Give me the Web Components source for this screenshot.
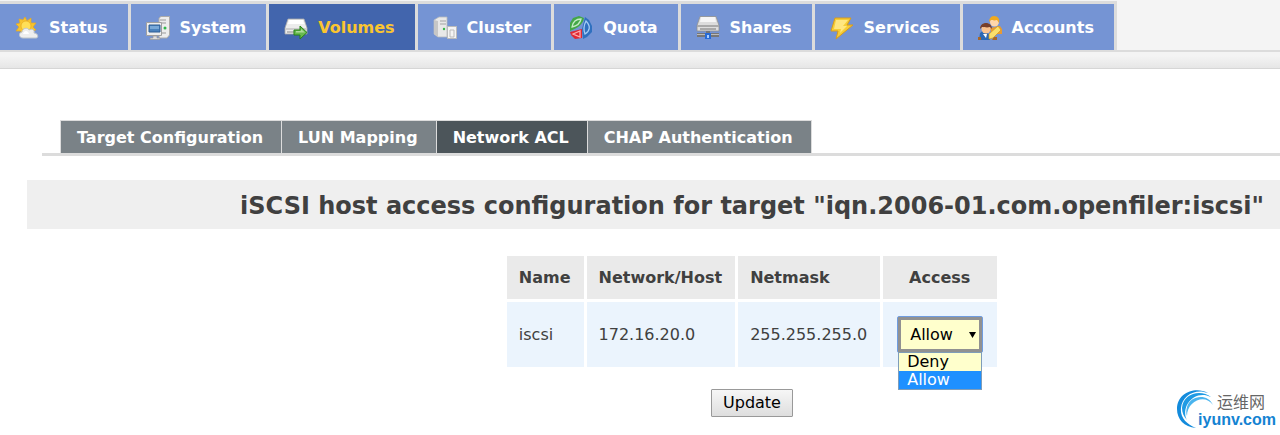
<!DOCTYPE html>
<html lang="en">
<head>
<meta charset="utf-8">
<meta name="viewport" content="width=device-width, initial-scale=1">
<title>Openfiler - Network ACL</title>
<style>
body { margin: 0; background: #fff; color: #404040; font: 16px/20px "DejaVu Sans", Verdana, sans-serif; overflow-x: hidden; }
</style>
</head>
<body>
<of-app></of-app>

<template id="t-app">
<style>
:host { display: block; position: relative; }
main { padding: 51px 0 18px 27px; }
.tabs { margin-left: 15px; }
.panel { padding-left: 197px; }
h1 { margin: 24px 0 27px; padding: 11px 0 8px 197px; background: #efefef; text-align: center; font-size: 24px; line-height: 30px; white-space: nowrap; }
of-brand { position: absolute; right: 4px; bottom: 6px; }
</style>
<of-nav>
<of-nav-item icon="status">Status</of-nav-item>
<of-nav-item icon="system">System</of-nav-item>
<of-nav-item icon="volumes" active>Volumes</of-nav-item>
<of-nav-item icon="cluster">Cluster</of-nav-item>
<of-nav-item icon="quota">Quota</of-nav-item>
<of-nav-item icon="shares">Shares</of-nav-item>
<of-nav-item icon="services">Services</of-nav-item>
<of-nav-item icon="accounts">Accounts</of-nav-item>
</of-nav>
<main>
<of-tabs class="tabs">
<of-tab>Target Configuration</of-tab>
<of-tab>LUN Mapping</of-tab>
<of-tab active>Network ACL</of-tab>
<of-tab>CHAP Authentication</of-tab>
</of-tabs>
<h1>iSCSI host access configuration for target "iqn.2006-01.com.openfiler:iscsi"</h1>
<div class="panel"><of-acl></of-acl></div>
</main>
<of-brand></of-brand>
</template>

<template id="t-nav">
<style>
:host { display: block; padding: 1px 0 16px; border-bottom: 1px solid #d6d6d6; background: linear-gradient(#f4f4f4 56px, #e6e6e6); }
nav { display: flex; border-bottom: 2px solid #dcdcdc; }
</style>
<nav><slot></slot></nav>
</template>

<template id="t-nav-item">
<style>
:host { display: block; border: solid #dcdcdc; border-width: 3px 3px 0 0; }
a { display: flex; align-items: center; gap: 10px; height: 46px; box-sizing: border-box; padding: 2px 20px 0 15px; background: #7594d4; color: #fff; font-weight: bold; text-decoration: none; }
:host([active]) a { background: #4265ad; color: #fbc52f; }
svg { width: 24px; height: 24px; flex: none; }
</style>
<a href="#"><svg viewBox="0 0 24 24" aria-hidden="true"></svg><slot></slot></a>
</template>

<template id="t-tabs">
<style>
:host { display: flex; padding-left: 18px; border-bottom: 3px solid #dcdcdc; }
</style>
<slot></slot>
</template>

<template id="t-tab">
<style>
:host { display: block; border: solid #dcdcdc; border-width: 1px 1px 0 0; }
:host(:first-child) { border-left-width: 1px; }
a { display: block; padding: 7px 18px 5px 16px; background: #7a8287; color: #fff; font-weight: bold; text-decoration: none; white-space: nowrap; }
:host([active]) a { background: #4c555a; }
</style>
<a href="#"><slot></slot></a>
</template>

<template id="t-acl">
<style>
:host { display: block; }
form { display: flex; flex-direction: column; align-items: center; gap: 22px; }
table { border-collapse: separate; border-spacing: 3px; margin: -3px 0; }
th { padding: 12px 13px 11px 12px; background: #eaeaea; text-align: left; }
th:last-child { text-align: center; }
td { padding: 14px 13px 14px 12px; background: #ebf4fd; }
td:last-child { padding: 14px; }
button { padding: 3px 11px; border: 1px solid #999; border-radius: 1px; background: linear-gradient(#f6f6f6, #dedede); color: #000; font: inherit; }
</style>
<form>
<table>
<thead><tr><th scope="col">Name</th><th scope="col">Network/Host</th><th scope="col">Netmask</th><th scope="col">Access</th></tr></thead>
<tbody><tr><td>iscsi</td><td>172.16.20.0</td><td>255.255.255.0</td><td><of-select></of-select></td></tr></tbody>
</table>
<button type="button">Update</button>
</form>
</template>

<template id="t-select">
<style>
:host { display: block; position: relative; color: #000; }
.box { display: grid; align-items: center; border: 1px solid #6f9ce0; border-radius: 2px; }
select, svg { grid-area: 1 / 1; }
select { appearance: none; width: 100%; height: 35px; box-sizing: border-box; margin: 0; padding: 0 26px 0 9px; border: 3px solid #919191; border-radius: 0; background: #ffffcc; color: inherit; font: inherit; outline: 0; }
svg { justify-self: end; margin-right: 6px; width: 7px; height: 6px; pointer-events: none; }
ul { position: absolute; top: 100%; left: 1px; right: 1px; margin: -1px 0 0; padding: 0; border: 1px solid #7f9db9; background: #ffffcc; list-style: none; line-height: 18px; z-index: 1; }
li { padding-left: 8px; }
li[aria-selected=true] { background: #1e90ff; color: #fff; }
</style>
<div class="box">
<select aria-label="Access"><option>Deny</option><option selected>Allow</option></select>
<svg viewBox="0 0 7 6" aria-hidden="true"><path d="M0 0h7L3.500 6z"/></svg>
</div>
<ul role="listbox" aria-label="Access"><li role="option" aria-selected="false">Deny</li><li role="option" aria-selected="true">Allow</li></ul>
</template>

<template id="t-brand">
<style>
:host { display: flex; align-items: flex-start; font-family: "Liberation Sans", "Noto Sans CJK SC", sans-serif; }
svg { width: 40px; height: 40px; margin: -2px -19px 0 0; }
span { display: block; }
.zh { padding-left: 19px; color: #666; font: 16px/20px "Noto Sans CJK SC", sans-serif; }
.en { color: #1483d2; font-size: 16px; line-height: 18px; font-weight: bold; }
</style>
<svg viewBox="0 0 40 40" aria-hidden="true"><path fill="#138bdc" d="M31 4C19-3 0 3 0 20c0 10 7 18 19 19C9 35 3 28 4 19 5 6 19-1 31 4z"/><path fill="#1f9ae4" d="M34 8C24 0 6 4 5 19c0 5 2 9 5 12C3 17 18 0 34 8z"/><path fill="#4ab4ee" d="M36 16C31 4 13 6 10 18c-1 4-1 6 0 9 0-15 18-23 26-11z"/></svg>
<div><span class="zh">运维网</span><span class="en">iyunv.com</span></div>
</template>

<script>
const icons = {
status: `<g fill="#f7c42f" stroke="#e8a91c" stroke-width=".7"><path d="M10 1l2 4 4-3v5l5 0-3 4 3 3-5 1-2 5-4-3-4 3 0-5-5 0 3-4-3-3 4-1-1-4 4 1z"/><circle cx="11" cy="10" r="5" fill="#ffdf57"/></g><path fill="#eee" stroke="#c0c6c9" d="M8 22c-4 0-5-5-1-6 0-4 6-5 7-2 3-2 6 0 5 3 4 0 5 5 2 5z"/><path fill="#fff" d="M8 18c1-4 5-4 6 0z"/>`,
system: `<path fill="#ededed" stroke="#aaa" d="M13 2l2-1.500h8.500V19L21 22h-8z"/><path stroke="#999" d="M14 4h6M14 7h6M14 17h6"/><circle cx="19" cy="12" r="1.500" fill="#31b94b"/><path fill="#eee" stroke="#a0a0a0" d="M.5 6.500h15v13H.5z"/><path fill="#4a82bd" stroke="#2d5c94" d="M3 9h11v7H3z"/><path fill="#78a8d8" d="M4 10h9v3H4z"/><path fill="#ddd" stroke="#999" stroke-width=".7" d="M7 20h4v2h3v1.500H4V22h3z"/>`,
volumes: `<path fill="#ececec" stroke="#aaa" stroke-width=".8" d="M4 3h16l3 9v6H1v-6z"/><path fill="#fff" d="M5 4h14l1 4H4z"/><path fill="#ccc" d="M1 12h22v2H1z"/><path stroke="#888" d="M3 16h8"/><path fill="#68b94f" stroke="#258415" d="M10 14h6v-4l7 6.500-7 6.500v-4h-6z"/><path fill="#acdb9a" d="M12 15h5v-2l4 3.500H12z"/>`,
cluster: `<path fill="#e8e8e8" stroke="#b4b8bc" stroke-width=".8" d="M1 4l5-3h8v20H5l-4-3z"/><path fill="#c6c6c6" d="M1 4l4 1v16l-4-3z"/><path stroke="#a2a2a2" d="M7 5h6M7 8h6"/><circle cx="11" cy="13" r="1.200" fill="#35b848"/><path fill="#f4f4f4" stroke="#bbb" d="M14.500 10.500h9v12h-9z"/><path fill="none" stroke="#bbb" d="M17 14h4v7h-4z"/>`,
quota: `<path fill="#43a747" d="M4 2l6-2 5 2c-1 6-6 10-14 13V7z"/><path fill="none" stroke="#c4ecc5" stroke-width="1.300" d="M3 11c1-6 4-8 9-8-1 5-4 7-9 8z"/><path fill="#2f70bf" d="M16 1l4 3 3 6v6l-5 5-4 2-1-10z"/><path fill="none" stroke="#a6ccf4" stroke-width="1.300" d="M17 5c5 5 4 10-1 13-2-5-1-9 1-13z"/><path fill="#df2833" d="M1 16l12-3v9l-7 1-4-4z"/><path fill="none" stroke="#ffacac" stroke-width="1.300" d="M4 18l7-3v6z"/>`,
shares: `<path fill="#ddd" stroke="#909090" stroke-width=".8" d="M4 .5h16l3 9V15H1V9.500z"/><path fill="#f6f6f6" d="M5 1h14l1 5H4z"/><path fill="#aaa" d="M1 9h22v2H1z"/><path stroke="#777" d="M4 13h16"/><path fill="#777" d="M10 15h4v2h9v4H1v-4h9z"/><path stroke="#bbb" d="M1 18.500h22"/><path fill="#286bd5" d="M9 17h6v6H9z"/><path fill="#aaceff" d="M11 19h2v3h-2z"/>`,
services: `<path fill="#f6cd36" stroke="#d99b1c" d="M5 2h16l-4 7h6L6 23l2-8H1z"/><path fill="#ffe681" d="M6 4h12l-5 6h4l-7 7 1-4H4z"/>`,
accounts: `<path fill="#e99a32" d="M12 12l10-2 2 3v5h-6l-5-2z"/><circle cx="16.500" cy="6" r="4.500" fill="#ffd6aa"/><path fill="#f0a91f" d="M11 6c0-3 2-6 5-6 4 0 6 3 5 7l-2-3c-3 1-5 0-6 0z"/><path fill="#2b68b5" d="M1 24l1-7 4-3 6 5v5z"/><circle cx="8" cy="13" r="4.500" fill="#fac28d"/><path fill="#783f2a" d="M2 13c0-8 12-8 12 0l-2-2c-3 1-6 0-8 0z"/><path fill="#fff" d="M5 18h4l-1 4z"/><path fill="#f9df6c" stroke="#d3961e" stroke-width=".7" d="M11 18l9-8 3 4-8 8-4 1z"/><path fill="#a86728" d="M0 21h3v3H0zM16 21h3v3h-5z"/>`
};
function define(name, setup) {
  customElements.define('of-' + name, class extends HTMLElement {
    connectedCallback() {
      if (this.shadowRoot) return;
      const root = this.attachShadow({ mode: 'open' });
      root.append(document.getElementById('t-' + name).content.cloneNode(true));
      if (setup) setup(this, root);
    }
  });
}
define('nav');
define('nav-item', (host, root) => { root.querySelector('svg').innerHTML = icons[host.getAttribute('icon')]; });
define('tabs');
define('tab');
define('select');
define('acl');
define('brand');
define('app');
</script>
</body>
</html>
